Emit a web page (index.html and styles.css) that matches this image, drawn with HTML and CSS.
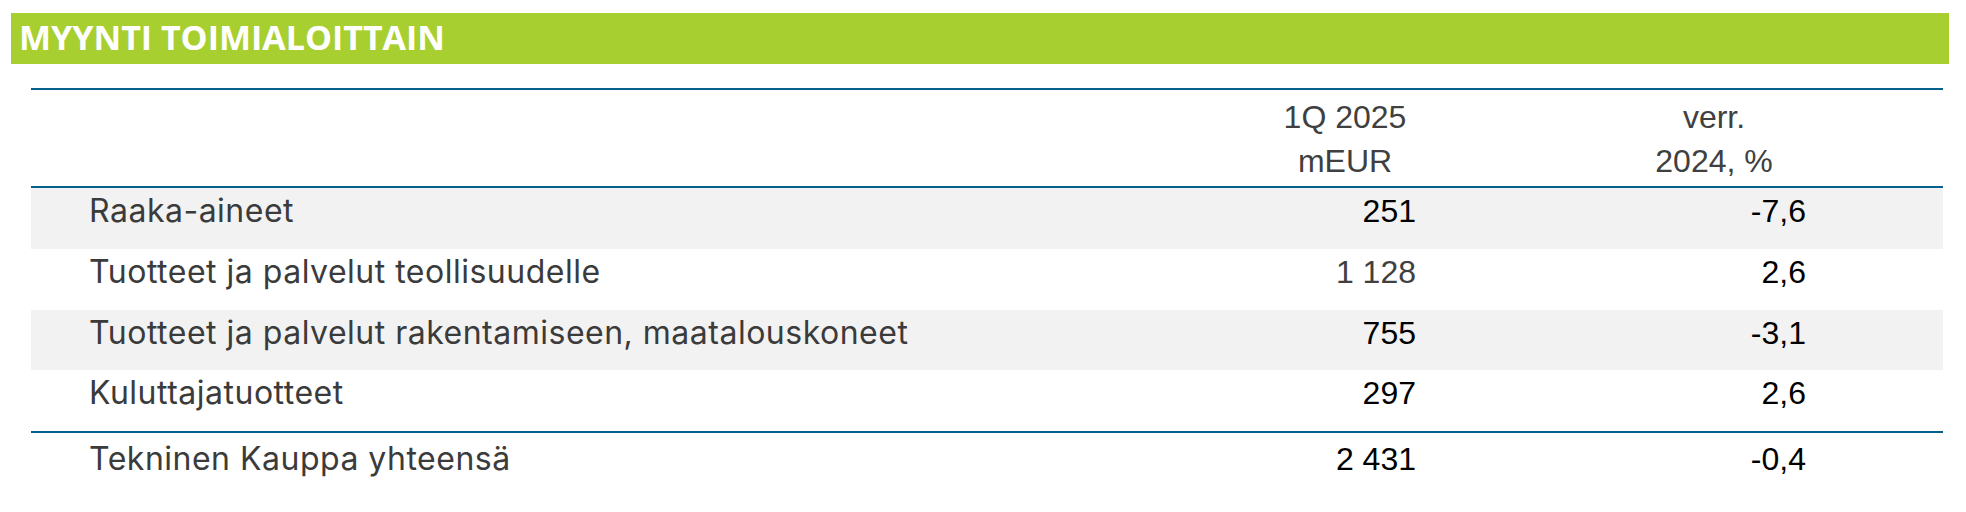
FILE: index.html
```html
<!DOCTYPE html>
<html lang="fi">
<head>
<meta charset="utf-8">
<title>Myynti toimialoittain</title>
<link rel="stylesheet" href="styles.css">
</head>
<body>
<div class="page">
  <div class="title-bar"><h1 class="title">MYYNTI TOIMIALOITTAIN</h1></div>
  <div class="table">
    <div class="head row-grid">
      <div class="cell label"></div>
      <div class="cell hcol">1Q 2025<br>mEUR</div>
      <div class="cell"></div>
      <div class="cell hcol">verr.<br>2024, %</div>
      <div class="cell"></div>
    </div>
    <div class="row row-grid shaded">
      <div class="cell label">Raaka-aineet</div>
      <div class="cell num">251</div>
      <div class="cell"></div>
      <div class="cell num">-7,6</div>
      <div class="cell"></div>
    </div>
    <div class="row row-grid">
      <div class="cell label">Tuotteet ja palvelut teollisuudelle</div>
      <div class="cell num muted">1 128</div>
      <div class="cell"></div>
      <div class="cell num">2,6</div>
      <div class="cell"></div>
    </div>
    <div class="row row-grid shaded">
      <div class="cell label">Tuotteet ja palvelut rakentamiseen, maatalouskoneet</div>
      <div class="cell num">755</div>
      <div class="cell"></div>
      <div class="cell num">-3,1</div>
      <div class="cell"></div>
    </div>
    <div class="row row-grid">
      <div class="cell label">Kuluttajatuotteet</div>
      <div class="cell num">297</div>
      <div class="cell"></div>
      <div class="cell num">2,6</div>
      <div class="cell"></div>
    </div>
    <div class="row row-grid total">
      <div class="cell label">Tekninen Kauppa yhteensä</div>
      <div class="cell num">2 431</div>
      <div class="cell"></div>
      <div class="cell num">-0,4</div>
      <div class="cell"></div>
    </div>
  </div>
</div>
</body>
</html>
```

FILE: styles.css
```css
html, body {
  margin: 0;
  padding: 0;
  background: #ffffff;
}

.page {
  padding: 13px 17px 0 11px;
}

.title-bar {
  background: #a8cf30;
  height: 51px;
  display: flex;
  align-items: flex-start;
}

.title {
  margin: 0;
  padding: 2px 0 0 8px;
  font-family: "Open Sans", "DejaVu Sans", sans-serif;
  font-weight: 700;
  font-size: 34px;
  line-height: 44px;
  color: #ffffff;
  letter-spacing: 0;
}

.table {
  margin: 24px 6px 0 20px;
  border-top: 2px solid #05618c;
}

.row-grid {
  display: grid;
  grid-template-columns: 1243px 142px 206px 184px 1fr;
}

.head {
  padding: 5px 0 3px;
  border-bottom: 2px solid #05618c;
  font-family: "Liberation Sans", Arial, sans-serif;
  font-size: 32px;
  line-height: 44px;
  color: #404040;
}

.hcol {
  text-align: center;
}

.row {
  height: 60.75px;
  box-sizing: border-box;
  padding-top: 3px;
  line-height: 40px;
}

.shaded {
  background: #f2f2f2;
}

.total {
  border-top: 2px solid #05618c;
  height: 62px;
  padding-top: 6px;
}

.label {
  padding-left: 58px;
  font-family: "Inter", "Liberation Sans", sans-serif;
  font-size: 32px;
  letter-spacing: 0.5px;
  color: #3b3b3b;
  white-space: nowrap;
}

.num {
  text-align: right;
  font-family: "Liberation Sans", Arial, sans-serif;
  font-size: 32px;
  color: #000000;
}

.muted {
  color: #404040;
}
```
